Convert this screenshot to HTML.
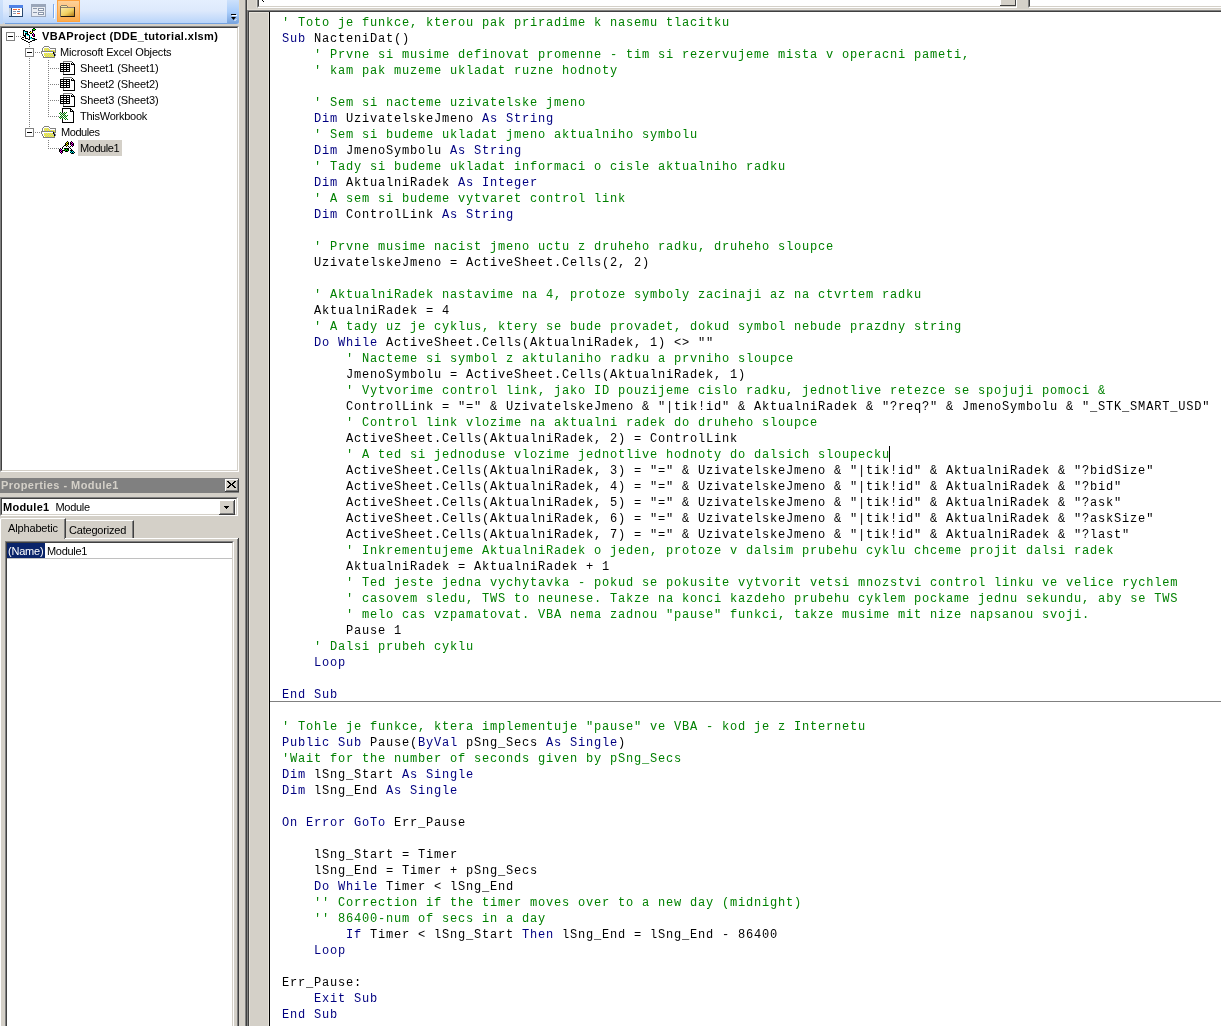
<!DOCTYPE html>
<html><head><meta charset="utf-8">
<style>
*{margin:0;padding:0;box-sizing:border-box}
html,body{will-change:transform;width:1221px;height:1026px;overflow:hidden;background:#d4d0c8;position:relative;font-family:"Liberation Sans",sans-serif}
.a{position:absolute}
.tr{font-size:11px;line-height:14px;white-space:nowrap;color:#000}
/* code */
#code{position:absolute;left:270px;top:12px;width:951px;height:1014px;background:#fff;overflow:hidden}
#code pre{position:absolute;left:12px;top:3px;font-family:"Liberation Mono",monospace;font-size:12px;letter-spacing:0.8px;line-height:16px;color:#000;white-space:pre}
.c{color:#008000}
.k{color:#000080}
</style></head><body>

<!-- left toolbar -->
<div class="a" style="left:0;top:0;width:3px;height:24px;background:linear-gradient(#cfe2fb,#b9d4f8)"></div>
<div class="a" style="left:3px;top:0;width:236px;height:24px;background:linear-gradient(#e4effe 0%,#dde9fc 45%,#b6d3fa 100%);border-bottom-left-radius:3px"></div>
<div class="a" style="left:5px;top:23px;width:222px;height:1px;background:#73a1e0"></div>
<div class="a" style="left:227px;top:0;width:12px;height:24px;background:linear-gradient(#cde1fb 0%,#a9cdfb 50%,#76a2dd 100%);border-bottom-right-radius:3px"></div>
<div class="a" style="left:231px;top:14px;width:5px;height:1px;background:#000"></div>
<div class="a" style="left:232px;top:15px;width:5px;height:1px;background:#fff"></div>
<svg class="a" style="left:230px;top:16px" width="8" height="6"><path d="M1 1h5l-2.5 3z" fill="#000"/><path d="M4.5 5l2-2" stroke="#fff" stroke-width="1"/></svg>
<!-- icon view code -->
<svg class="a" style="left:9px;top:5px" width="14" height="12">
<rect x="0" y="0" width="14" height="12" fill="#2b4a70"/>
<rect x="0" y="0" width="14" height="3" fill="#4f82e6"/>
<rect x="0" y="3" width="2" height="8" fill="#c8d4e0"/>
<rect x="3" y="3" width="10" height="8" fill="#fff"/>
<rect x="4" y="4" width="4" height="1" fill="#f36b3d"/><rect x="9" y="4" width="2" height="1" fill="#f36b3d"/>
<rect x="4" y="6" width="3" height="1" fill="#8a98b0"/><rect x="8" y="6" width="3" height="1" fill="#6080a8"/>
<rect x="4" y="8" width="3" height="1" fill="#8a98b0"/><rect x="8" y="8" width="3" height="1" fill="#f36b3d"/>
</svg>
<!-- icon view object -->
<svg class="a" style="left:31px;top:4px" width="15" height="13">
<rect x="0" y="0" width="15" height="13" fill="#9aa6ba"/>
<rect x="1" y="3" width="13" height="9" fill="#e8ecf2"/>
<rect x="2" y="4" width="4" height="1" fill="#8a96aa"/><rect x="2" y="8" width="4" height="1" fill="#8a96aa"/>
<rect x="7" y="4" width="6" height="3" fill="#8a96aa"/><rect x="8" y="5" width="4" height="1" fill="#fff"/>
<rect x="7" y="8" width="6" height="3" fill="#8a96aa"/><rect x="8" y="9" width="4" height="1" fill="#fff"/>
</svg>
<div class="a" style="left:53px;top:4px;width:1px;height:14px;background:#7ba9ee"></div>
<div class="a" style="left:54px;top:5px;width:1px;height:14px;background:#fff"></div>
<!-- toggle folders -->
<div class="a" style="left:57px;top:0;width:23px;height:22px;background:linear-gradient(#fdd19a,#fdac4c);border:1px solid #fea23f"></div>
<svg class="a" style="left:60px;top:5px" width="15" height="13" shape-rendering="crispEdges">
<defs><linearGradient id="fg" x1="0" y1="0" x2="1" y2="1"><stop offset="0" stop-color="#fbeaa6"/><stop offset="0.55" stop-color="#f2d060"/><stop offset="1" stop-color="#b07818"/></linearGradient></defs>
<rect x="1" y="0" width="6" height="1" fill="#8a8070"/>
<rect x="0" y="1" width="1" height="11" fill="#7a7060"/>
<rect x="1" y="1" width="6" height="1" fill="#f8e8a0"/>
<rect x="7" y="1" width="1" height="1" fill="#8a8070"/>
<rect x="1" y="2" width="13" height="1" fill="#8a8070"/>
<rect x="1" y="3" width="13" height="8" fill="url(#fg)"/>
<rect x="1" y="11" width="14" height="1" fill="#201810"/>
<rect x="14" y="2" width="1" height="10" fill="#302418"/>
</svg>

<!-- project explorer box -->
<div class="a" style="left:0;top:26px;width:239px;height:446px;border-top:1px solid #808080;border-left:1px solid #808080;border-right:1px solid #fff;border-bottom:1px solid #fff"></div>
<div class="a" style="left:1px;top:27px;width:237px;height:444px;border-top:1px solid #404040;border-left:1px solid #404040;border-right:1px solid #d4d0c8;border-bottom:1px solid #d4d0c8;background:#fff"></div>
<svg class="a" style="left:0;top:0" width="239" height="470">
<g fill="#808080"><rect x="16" y="36" width="1" height="1"/><rect x="18" y="36" width="1" height="1"/><rect x="20" y="36" width="1" height="1"/><rect x="29" y="42" width="1" height="1"/><rect x="29" y="44" width="1" height="1"/><rect x="29" y="46" width="1" height="1"/><rect x="29" y="58" width="1" height="1"/><rect x="29" y="60" width="1" height="1"/><rect x="29" y="62" width="1" height="1"/><rect x="29" y="64" width="1" height="1"/><rect x="29" y="66" width="1" height="1"/><rect x="29" y="68" width="1" height="1"/><rect x="29" y="70" width="1" height="1"/><rect x="29" y="72" width="1" height="1"/><rect x="29" y="74" width="1" height="1"/><rect x="29" y="76" width="1" height="1"/><rect x="29" y="78" width="1" height="1"/><rect x="29" y="80" width="1" height="1"/><rect x="29" y="82" width="1" height="1"/><rect x="29" y="84" width="1" height="1"/><rect x="29" y="86" width="1" height="1"/><rect x="29" y="88" width="1" height="1"/><rect x="29" y="90" width="1" height="1"/><rect x="29" y="92" width="1" height="1"/><rect x="29" y="94" width="1" height="1"/><rect x="29" y="96" width="1" height="1"/><rect x="29" y="98" width="1" height="1"/><rect x="29" y="100" width="1" height="1"/><rect x="29" y="102" width="1" height="1"/><rect x="29" y="104" width="1" height="1"/><rect x="29" y="106" width="1" height="1"/><rect x="29" y="108" width="1" height="1"/><rect x="29" y="110" width="1" height="1"/><rect x="29" y="112" width="1" height="1"/><rect x="29" y="114" width="1" height="1"/><rect x="29" y="116" width="1" height="1"/><rect x="29" y="118" width="1" height="1"/><rect x="29" y="120" width="1" height="1"/><rect x="29" y="122" width="1" height="1"/><rect x="29" y="124" width="1" height="1"/><rect x="29" y="126" width="1" height="1"/><rect x="35" y="52" width="1" height="1"/><rect x="37" y="52" width="1" height="1"/><rect x="39" y="52" width="1" height="1"/><rect x="35" y="132" width="1" height="1"/><rect x="37" y="132" width="1" height="1"/><rect x="39" y="132" width="1" height="1"/><rect x="48" y="60" width="1" height="1"/><rect x="48" y="62" width="1" height="1"/><rect x="48" y="64" width="1" height="1"/><rect x="48" y="66" width="1" height="1"/><rect x="48" y="68" width="1" height="1"/><rect x="48" y="70" width="1" height="1"/><rect x="48" y="72" width="1" height="1"/><rect x="48" y="74" width="1" height="1"/><rect x="48" y="76" width="1" height="1"/><rect x="48" y="78" width="1" height="1"/><rect x="48" y="80" width="1" height="1"/><rect x="48" y="82" width="1" height="1"/><rect x="48" y="84" width="1" height="1"/><rect x="48" y="86" width="1" height="1"/><rect x="48" y="88" width="1" height="1"/><rect x="48" y="90" width="1" height="1"/><rect x="48" y="92" width="1" height="1"/><rect x="48" y="94" width="1" height="1"/><rect x="48" y="96" width="1" height="1"/><rect x="48" y="98" width="1" height="1"/><rect x="48" y="100" width="1" height="1"/><rect x="48" y="102" width="1" height="1"/><rect x="48" y="104" width="1" height="1"/><rect x="48" y="106" width="1" height="1"/><rect x="48" y="108" width="1" height="1"/><rect x="48" y="110" width="1" height="1"/><rect x="48" y="112" width="1" height="1"/><rect x="48" y="114" width="1" height="1"/><rect x="48" y="116" width="1" height="1"/><rect x="50" y="68" width="1" height="1"/><rect x="52" y="68" width="1" height="1"/><rect x="54" y="68" width="1" height="1"/><rect x="56" y="68" width="1" height="1"/><rect x="58" y="68" width="1" height="1"/><rect x="50" y="84" width="1" height="1"/><rect x="52" y="84" width="1" height="1"/><rect x="54" y="84" width="1" height="1"/><rect x="56" y="84" width="1" height="1"/><rect x="58" y="84" width="1" height="1"/><rect x="50" y="100" width="1" height="1"/><rect x="52" y="100" width="1" height="1"/><rect x="54" y="100" width="1" height="1"/><rect x="56" y="100" width="1" height="1"/><rect x="58" y="100" width="1" height="1"/><rect x="50" y="116" width="1" height="1"/><rect x="52" y="116" width="1" height="1"/><rect x="54" y="116" width="1" height="1"/><rect x="56" y="116" width="1" height="1"/><rect x="58" y="116" width="1" height="1"/><rect x="48" y="140" width="1" height="1"/><rect x="48" y="142" width="1" height="1"/><rect x="48" y="144" width="1" height="1"/><rect x="48" y="146" width="1" height="1"/><rect x="48" y="148" width="1" height="1"/><rect x="50" y="148" width="1" height="1"/><rect x="52" y="148" width="1" height="1"/><rect x="54" y="148" width="1" height="1"/><rect x="56" y="148" width="1" height="1"/><rect x="58" y="148" width="1" height="1"/></g>
<rect x="6.5" y="32.5" width="8" height="8" fill="#fff" stroke="#808080"/><rect x="8" y="36" width="5" height="1" fill="#000"/><rect x="25.5" y="48.5" width="8" height="8" fill="#fff" stroke="#808080"/><rect x="27" y="52" width="5" height="1" fill="#000"/><rect x="25.5" y="128.5" width="8" height="8" fill="#fff" stroke="#808080"/><rect x="27" y="132" width="5" height="1" fill="#000"/>
<!-- project icon --><rect x="33" y="28" width="2" height="1" fill="#000"/><rect x="32" y="29" width="1" height="1" fill="#000"/><rect x="33" y="29" width="2" height="1" fill="#00ff00"/><rect x="35" y="29" width="1" height="1" fill="#000"/><rect x="23" y="30" width="2" height="1" fill="#000"/><rect x="32" y="30" width="3" height="1" fill="#000"/><rect x="23" y="31" width="1" height="1" fill="#000"/><rect x="24" y="31" width="1" height="1" fill="#00ffff"/><rect x="25" y="31" width="3" height="1" fill="#000"/><rect x="30" y="31" width="1" height="1" fill="#000"/><rect x="32" y="31" width="1" height="1" fill="#000"/><rect x="23" y="32" width="1" height="1" fill="#000"/><rect x="24" y="32" width="1" height="1" fill="#fff"/><rect x="25" y="32" width="2" height="1" fill="#00ffff"/><rect x="27" y="32" width="1" height="1" fill="#000"/><rect x="29" y="32" width="1" height="1" fill="#000"/><rect x="30" y="32" width="2" height="1" fill="#ffff00"/><rect x="32" y="32" width="1" height="1" fill="#000"/><rect x="23" y="33" width="1" height="1" fill="#000"/><rect x="24" y="33" width="1" height="1" fill="#fff"/><rect x="25" y="33" width="3" height="1" fill="#000"/><rect x="30" y="33" width="2" height="1" fill="#000"/><rect x="32" y="33" width="1" height="1" fill="#fff"/><rect x="33" y="33" width="1" height="1" fill="#000"/><rect x="23" y="34" width="1" height="1" fill="#000"/><rect x="24" y="34" width="1" height="1" fill="#fff"/><rect x="25" y="34" width="1" height="1" fill="#000"/><rect x="26" y="34" width="1" height="1" fill="#00ffff"/><rect x="27" y="34" width="2" height="1" fill="#000"/><rect x="30" y="34" width="1" height="1" fill="#fff"/><rect x="32" y="34" width="1" height="1" fill="#000"/><rect x="33" y="34" width="1" height="1" fill="#ff00ff"/><rect x="34" y="34" width="1" height="1" fill="#000"/><rect x="23" y="35" width="3" height="1" fill="#000"/><rect x="26" y="35" width="1" height="1" fill="#fff"/><rect x="27" y="35" width="2" height="1" fill="#00ffff"/><rect x="29" y="35" width="1" height="1" fill="#000"/><rect x="32" y="35" width="1" height="1" fill="#000"/><rect x="33" y="35" width="1" height="1" fill="#ff00ff"/><rect x="34" y="35" width="1" height="1" fill="#000"/><rect x="24" y="36" width="2" height="1" fill="#000"/><rect x="26" y="36" width="3" height="1" fill="#fff"/><rect x="29" y="36" width="1" height="1" fill="#000"/><rect x="33" y="36" width="2" height="1" fill="#000"/><rect x="22" y="37" width="2" height="1" fill="#000"/><rect x="25" y="37" width="1" height="1" fill="#000"/><rect x="26" y="37" width="3" height="1" fill="#fff"/><rect x="29" y="37" width="1" height="1" fill="#000"/><rect x="30" y="37" width="1" height="1" fill="#00ffff"/><rect x="31" y="37" width="1" height="1" fill="#000"/><rect x="21" y="38" width="1" height="1" fill="#000"/><rect x="22" y="38" width="1" height="1" fill="#fff"/><rect x="25" y="38" width="3" height="1" fill="#000"/><rect x="28" y="38" width="1" height="1" fill="#fff"/><rect x="29" y="38" width="1" height="1" fill="#000"/><rect x="30" y="38" width="2" height="1" fill="#00ffff"/><rect x="32" y="38" width="3" height="1" fill="#000"/><rect x="22" y="39" width="2" height="1" fill="#000"/><rect x="28" y="39" width="2" height="1" fill="#000"/><rect x="30" y="39" width="3" height="1" fill="#fff"/><rect x="33" y="39" width="1" height="1" fill="#00ffff"/><rect x="34" y="39" width="3" height="1" fill="#000"/><rect x="24" y="40" width="2" height="1" fill="#000"/><rect x="32" y="40" width="3" height="1" fill="#000"/><rect x="26" y="41" width="2" height="1" fill="#000"/><rect x="30" y="41" width="2" height="1" fill="#000"/><rect x="28" y="42" width="2" height="1" fill="#000"/>
<rect x="44" y="46" width="5" height="1" fill="#808080"/><rect x="43" y="47" width="1" height="1" fill="#808080"/><rect x="44" y="47" width="5" height="1" fill="#fff"/><rect x="49" y="47" width="1" height="1" fill="#808080"/><rect x="42" y="48" width="1" height="1" fill="#808080"/><rect x="43" y="48" width="1" height="1" fill="#fff"/><rect x="44" y="48" width="1" height="1" fill="#c0c0c0"/><rect x="45" y="48" width="1" height="1" fill="#ffff00"/><rect x="46" y="48" width="1" height="1" fill="#c0c0c0"/><rect x="47" y="48" width="1" height="1" fill="#ffff00"/><rect x="48" y="48" width="1" height="1" fill="#c0c0c0"/><rect x="49" y="48" width="1" height="1" fill="#fff"/><rect x="50" y="48" width="6" height="1" fill="#808080"/><rect x="42" y="49" width="1" height="1" fill="#808080"/><rect x="43" y="49" width="1" height="1" fill="#fff"/><rect x="44" y="49" width="1" height="1" fill="#ffff00"/><rect x="45" y="49" width="1" height="1" fill="#c0c0c0"/><rect x="46" y="49" width="1" height="1" fill="#ffff00"/><rect x="47" y="49" width="1" height="1" fill="#c0c0c0"/><rect x="48" y="49" width="1" height="1" fill="#ffff00"/><rect x="49" y="49" width="1" height="1" fill="#c0c0c0"/><rect x="50" y="49" width="5" height="1" fill="#fff"/><rect x="55" y="49" width="1" height="1" fill="#808080"/><rect x="42" y="50" width="1" height="1" fill="#808080"/><rect x="43" y="50" width="1" height="1" fill="#fff"/><rect x="44" y="50" width="1" height="1" fill="#c0c0c0"/><rect x="45" y="50" width="1" height="1" fill="#ffff00"/><rect x="46" y="50" width="1" height="1" fill="#c0c0c0"/><rect x="47" y="50" width="1" height="1" fill="#ffff00"/><rect x="48" y="50" width="1" height="1" fill="#c0c0c0"/><rect x="49" y="50" width="1" height="1" fill="#ffff00"/><rect x="50" y="50" width="1" height="1" fill="#c0c0c0"/><rect x="51" y="50" width="1" height="1" fill="#ffff00"/><rect x="52" y="50" width="1" height="1" fill="#c0c0c0"/><rect x="53" y="50" width="1" height="1" fill="#ffff00"/><rect x="54" y="50" width="1" height="1" fill="#c0c0c0"/><rect x="55" y="50" width="1" height="1" fill="#808080"/><rect x="41" y="51" width="13" height="1" fill="#808080"/><rect x="54" y="51" width="1" height="1" fill="#ffff00"/><rect x="55" y="51" width="1" height="1" fill="#808080"/><rect x="41" y="52" width="1" height="1" fill="#808080"/><rect x="42" y="52" width="11" height="1" fill="#fff"/><rect x="53" y="52" width="1" height="1" fill="#000"/><rect x="54" y="52" width="2" height="1" fill="#808080"/><rect x="41" y="53" width="1" height="1" fill="#808080"/><rect x="42" y="53" width="2" height="1" fill="#fff"/><rect x="44" y="53" width="1" height="1" fill="#ffff00"/><rect x="45" y="53" width="1" height="1" fill="#c0c0c0"/><rect x="46" y="53" width="1" height="1" fill="#ffff00"/><rect x="47" y="53" width="1" height="1" fill="#c0c0c0"/><rect x="48" y="53" width="1" height="1" fill="#ffff00"/><rect x="49" y="53" width="1" height="1" fill="#c0c0c0"/><rect x="50" y="53" width="1" height="1" fill="#ffff00"/><rect x="51" y="53" width="1" height="1" fill="#c0c0c0"/><rect x="52" y="53" width="1" height="1" fill="#ffff00"/><rect x="53" y="53" width="1" height="1" fill="#000"/><rect x="54" y="53" width="1" height="1" fill="#808080"/><rect x="42" y="54" width="1" height="1" fill="#808080"/><rect x="43" y="54" width="1" height="1" fill="#fff"/><rect x="44" y="54" width="1" height="1" fill="#c0c0c0"/><rect x="45" y="54" width="1" height="1" fill="#ffff00"/><rect x="46" y="54" width="1" height="1" fill="#c0c0c0"/><rect x="47" y="54" width="1" height="1" fill="#ffff00"/><rect x="48" y="54" width="1" height="1" fill="#c0c0c0"/><rect x="49" y="54" width="1" height="1" fill="#ffff00"/><rect x="50" y="54" width="1" height="1" fill="#c0c0c0"/><rect x="51" y="54" width="1" height="1" fill="#ffff00"/><rect x="52" y="54" width="2" height="1" fill="#c0c0c0"/><rect x="54" y="54" width="1" height="1" fill="#000"/><rect x="55" y="54" width="1" height="1" fill="#808080"/><rect x="42" y="55" width="1" height="1" fill="#808080"/><rect x="43" y="55" width="1" height="1" fill="#fff"/><rect x="44" y="55" width="1" height="1" fill="#ffff00"/><rect x="45" y="55" width="1" height="1" fill="#c0c0c0"/><rect x="46" y="55" width="1" height="1" fill="#ffff00"/><rect x="47" y="55" width="1" height="1" fill="#c0c0c0"/><rect x="48" y="55" width="1" height="1" fill="#ffff00"/><rect x="49" y="55" width="1" height="1" fill="#c0c0c0"/><rect x="50" y="55" width="1" height="1" fill="#ffff00"/><rect x="51" y="55" width="1" height="1" fill="#c0c0c0"/><rect x="52" y="55" width="1" height="1" fill="#ffff00"/><rect x="53" y="55" width="1" height="1" fill="#c0c0c0"/><rect x="54" y="55" width="1" height="1" fill="#000"/><rect x="55" y="55" width="1" height="1" fill="#808080"/><rect x="43" y="56" width="1" height="1" fill="#808080"/><rect x="44" y="56" width="1" height="1" fill="#fff"/><rect x="45" y="56" width="1" height="1" fill="#ffff00"/><rect x="46" y="56" width="1" height="1" fill="#c0c0c0"/><rect x="47" y="56" width="1" height="1" fill="#ffff00"/><rect x="48" y="56" width="1" height="1" fill="#c0c0c0"/><rect x="49" y="56" width="1" height="1" fill="#ffff00"/><rect x="50" y="56" width="1" height="1" fill="#c0c0c0"/><rect x="51" y="56" width="1" height="1" fill="#ffff00"/><rect x="52" y="56" width="1" height="1" fill="#c0c0c0"/><rect x="53" y="56" width="1" height="1" fill="#ffff00"/><rect x="54" y="56" width="1" height="1" fill="#808080"/><rect x="43" y="57" width="12" height="1" fill="#808080"/><rect x="44" y="126" width="5" height="1" fill="#808080"/><rect x="43" y="127" width="1" height="1" fill="#808080"/><rect x="44" y="127" width="5" height="1" fill="#fff"/><rect x="49" y="127" width="1" height="1" fill="#808080"/><rect x="42" y="128" width="1" height="1" fill="#808080"/><rect x="43" y="128" width="1" height="1" fill="#fff"/><rect x="44" y="128" width="1" height="1" fill="#c0c0c0"/><rect x="45" y="128" width="1" height="1" fill="#ffff00"/><rect x="46" y="128" width="1" height="1" fill="#c0c0c0"/><rect x="47" y="128" width="1" height="1" fill="#ffff00"/><rect x="48" y="128" width="1" height="1" fill="#c0c0c0"/><rect x="49" y="128" width="1" height="1" fill="#fff"/><rect x="50" y="128" width="6" height="1" fill="#808080"/><rect x="42" y="129" width="1" height="1" fill="#808080"/><rect x="43" y="129" width="1" height="1" fill="#fff"/><rect x="44" y="129" width="1" height="1" fill="#ffff00"/><rect x="45" y="129" width="1" height="1" fill="#c0c0c0"/><rect x="46" y="129" width="1" height="1" fill="#ffff00"/><rect x="47" y="129" width="1" height="1" fill="#c0c0c0"/><rect x="48" y="129" width="1" height="1" fill="#ffff00"/><rect x="49" y="129" width="1" height="1" fill="#c0c0c0"/><rect x="50" y="129" width="5" height="1" fill="#fff"/><rect x="55" y="129" width="1" height="1" fill="#808080"/><rect x="42" y="130" width="1" height="1" fill="#808080"/><rect x="43" y="130" width="1" height="1" fill="#fff"/><rect x="44" y="130" width="1" height="1" fill="#c0c0c0"/><rect x="45" y="130" width="1" height="1" fill="#ffff00"/><rect x="46" y="130" width="1" height="1" fill="#c0c0c0"/><rect x="47" y="130" width="1" height="1" fill="#ffff00"/><rect x="48" y="130" width="1" height="1" fill="#c0c0c0"/><rect x="49" y="130" width="1" height="1" fill="#ffff00"/><rect x="50" y="130" width="1" height="1" fill="#c0c0c0"/><rect x="51" y="130" width="1" height="1" fill="#ffff00"/><rect x="52" y="130" width="1" height="1" fill="#c0c0c0"/><rect x="53" y="130" width="1" height="1" fill="#ffff00"/><rect x="54" y="130" width="1" height="1" fill="#c0c0c0"/><rect x="55" y="130" width="1" height="1" fill="#808080"/><rect x="41" y="131" width="13" height="1" fill="#808080"/><rect x="54" y="131" width="1" height="1" fill="#ffff00"/><rect x="55" y="131" width="1" height="1" fill="#808080"/><rect x="41" y="132" width="1" height="1" fill="#808080"/><rect x="42" y="132" width="11" height="1" fill="#fff"/><rect x="53" y="132" width="1" height="1" fill="#000"/><rect x="54" y="132" width="2" height="1" fill="#808080"/><rect x="41" y="133" width="1" height="1" fill="#808080"/><rect x="42" y="133" width="2" height="1" fill="#fff"/><rect x="44" y="133" width="1" height="1" fill="#ffff00"/><rect x="45" y="133" width="1" height="1" fill="#c0c0c0"/><rect x="46" y="133" width="1" height="1" fill="#ffff00"/><rect x="47" y="133" width="1" height="1" fill="#c0c0c0"/><rect x="48" y="133" width="1" height="1" fill="#ffff00"/><rect x="49" y="133" width="1" height="1" fill="#c0c0c0"/><rect x="50" y="133" width="1" height="1" fill="#ffff00"/><rect x="51" y="133" width="1" height="1" fill="#c0c0c0"/><rect x="52" y="133" width="1" height="1" fill="#ffff00"/><rect x="53" y="133" width="1" height="1" fill="#000"/><rect x="54" y="133" width="1" height="1" fill="#808080"/><rect x="42" y="134" width="1" height="1" fill="#808080"/><rect x="43" y="134" width="1" height="1" fill="#fff"/><rect x="44" y="134" width="1" height="1" fill="#c0c0c0"/><rect x="45" y="134" width="1" height="1" fill="#ffff00"/><rect x="46" y="134" width="1" height="1" fill="#c0c0c0"/><rect x="47" y="134" width="1" height="1" fill="#ffff00"/><rect x="48" y="134" width="1" height="1" fill="#c0c0c0"/><rect x="49" y="134" width="1" height="1" fill="#ffff00"/><rect x="50" y="134" width="1" height="1" fill="#c0c0c0"/><rect x="51" y="134" width="1" height="1" fill="#ffff00"/><rect x="52" y="134" width="2" height="1" fill="#c0c0c0"/><rect x="54" y="134" width="1" height="1" fill="#000"/><rect x="55" y="134" width="1" height="1" fill="#808080"/><rect x="42" y="135" width="1" height="1" fill="#808080"/><rect x="43" y="135" width="1" height="1" fill="#fff"/><rect x="44" y="135" width="1" height="1" fill="#ffff00"/><rect x="45" y="135" width="1" height="1" fill="#c0c0c0"/><rect x="46" y="135" width="1" height="1" fill="#ffff00"/><rect x="47" y="135" width="1" height="1" fill="#c0c0c0"/><rect x="48" y="135" width="1" height="1" fill="#ffff00"/><rect x="49" y="135" width="1" height="1" fill="#c0c0c0"/><rect x="50" y="135" width="1" height="1" fill="#ffff00"/><rect x="51" y="135" width="1" height="1" fill="#c0c0c0"/><rect x="52" y="135" width="1" height="1" fill="#ffff00"/><rect x="53" y="135" width="1" height="1" fill="#c0c0c0"/><rect x="54" y="135" width="1" height="1" fill="#000"/><rect x="55" y="135" width="1" height="1" fill="#808080"/><rect x="43" y="136" width="1" height="1" fill="#808080"/><rect x="44" y="136" width="1" height="1" fill="#fff"/><rect x="45" y="136" width="1" height="1" fill="#ffff00"/><rect x="46" y="136" width="1" height="1" fill="#c0c0c0"/><rect x="47" y="136" width="1" height="1" fill="#ffff00"/><rect x="48" y="136" width="1" height="1" fill="#c0c0c0"/><rect x="49" y="136" width="1" height="1" fill="#ffff00"/><rect x="50" y="136" width="1" height="1" fill="#c0c0c0"/><rect x="51" y="136" width="1" height="1" fill="#ffff00"/><rect x="52" y="136" width="1" height="1" fill="#c0c0c0"/><rect x="53" y="136" width="1" height="1" fill="#ffff00"/><rect x="54" y="136" width="1" height="1" fill="#808080"/><rect x="43" y="137" width="12" height="1" fill="#808080"/>
<rect x="63" y="61" width="9" height="1" fill="#808080"/><rect x="63" y="62" width="1" height="1" fill="#808080"/><rect x="64" y="62" width="8" height="1" fill="#fff"/><rect x="72" y="62" width="1" height="1" fill="#000"/><rect x="60" y="63" width="10" height="1" fill="#000"/><rect x="70" y="63" width="1" height="1" fill="#fff"/><rect x="71" y="63" width="1" height="1" fill="#000"/><rect x="72" y="63" width="1" height="1" fill="#fff"/><rect x="73" y="63" width="1" height="1" fill="#000"/><rect x="60" y="64" width="1" height="1" fill="#000"/><rect x="61" y="64" width="2" height="1" fill="#fff"/><rect x="63" y="64" width="1" height="1" fill="#000"/><rect x="64" y="64" width="2" height="1" fill="#fff"/><rect x="66" y="64" width="1" height="1" fill="#000"/><rect x="67" y="64" width="2" height="1" fill="#fff"/><rect x="69" y="64" width="1" height="1" fill="#000"/><rect x="70" y="64" width="1" height="1" fill="#fff"/><rect x="71" y="64" width="4" height="1" fill="#000"/><rect x="60" y="65" width="10" height="1" fill="#000"/><rect x="70" y="65" width="4" height="1" fill="#fff"/><rect x="74" y="65" width="1" height="1" fill="#000"/><rect x="60" y="66" width="1" height="1" fill="#000"/><rect x="61" y="66" width="2" height="1" fill="#fff"/><rect x="63" y="66" width="1" height="1" fill="#000"/><rect x="64" y="66" width="2" height="1" fill="#fff"/><rect x="66" y="66" width="1" height="1" fill="#000"/><rect x="67" y="66" width="2" height="1" fill="#fff"/><rect x="69" y="66" width="1" height="1" fill="#000"/><rect x="70" y="66" width="4" height="1" fill="#fff"/><rect x="74" y="66" width="1" height="1" fill="#000"/><rect x="60" y="67" width="10" height="1" fill="#000"/><rect x="70" y="67" width="4" height="1" fill="#fff"/><rect x="74" y="67" width="1" height="1" fill="#000"/><rect x="60" y="68" width="1" height="1" fill="#000"/><rect x="61" y="68" width="2" height="1" fill="#fff"/><rect x="63" y="68" width="1" height="1" fill="#000"/><rect x="64" y="68" width="2" height="1" fill="#fff"/><rect x="66" y="68" width="1" height="1" fill="#000"/><rect x="67" y="68" width="2" height="1" fill="#fff"/><rect x="69" y="68" width="1" height="1" fill="#000"/><rect x="70" y="68" width="4" height="1" fill="#fff"/><rect x="74" y="68" width="1" height="1" fill="#000"/><rect x="60" y="69" width="10" height="1" fill="#000"/><rect x="70" y="69" width="4" height="1" fill="#fff"/><rect x="74" y="69" width="1" height="1" fill="#000"/><rect x="60" y="70" width="1" height="1" fill="#000"/><rect x="61" y="70" width="2" height="1" fill="#fff"/><rect x="63" y="70" width="1" height="1" fill="#000"/><rect x="64" y="70" width="2" height="1" fill="#fff"/><rect x="66" y="70" width="1" height="1" fill="#000"/><rect x="67" y="70" width="2" height="1" fill="#fff"/><rect x="69" y="70" width="1" height="1" fill="#000"/><rect x="70" y="70" width="4" height="1" fill="#fff"/><rect x="74" y="70" width="1" height="1" fill="#000"/><rect x="60" y="71" width="10" height="1" fill="#000"/><rect x="70" y="71" width="4" height="1" fill="#fff"/><rect x="74" y="71" width="1" height="1" fill="#000"/><rect x="63" y="72" width="1" height="1" fill="#808080"/><rect x="64" y="72" width="10" height="1" fill="#fff"/><rect x="74" y="72" width="1" height="1" fill="#000"/><rect x="63" y="73" width="1" height="1" fill="#808080"/><rect x="64" y="73" width="10" height="1" fill="#fff"/><rect x="74" y="73" width="1" height="1" fill="#000"/><rect x="63" y="74" width="12" height="1" fill="#000"/><rect x="63" y="77" width="9" height="1" fill="#808080"/><rect x="63" y="78" width="1" height="1" fill="#808080"/><rect x="64" y="78" width="8" height="1" fill="#fff"/><rect x="72" y="78" width="1" height="1" fill="#000"/><rect x="60" y="79" width="10" height="1" fill="#000"/><rect x="70" y="79" width="1" height="1" fill="#fff"/><rect x="71" y="79" width="1" height="1" fill="#000"/><rect x="72" y="79" width="1" height="1" fill="#fff"/><rect x="73" y="79" width="1" height="1" fill="#000"/><rect x="60" y="80" width="1" height="1" fill="#000"/><rect x="61" y="80" width="2" height="1" fill="#fff"/><rect x="63" y="80" width="1" height="1" fill="#000"/><rect x="64" y="80" width="2" height="1" fill="#fff"/><rect x="66" y="80" width="1" height="1" fill="#000"/><rect x="67" y="80" width="2" height="1" fill="#fff"/><rect x="69" y="80" width="1" height="1" fill="#000"/><rect x="70" y="80" width="1" height="1" fill="#fff"/><rect x="71" y="80" width="4" height="1" fill="#000"/><rect x="60" y="81" width="10" height="1" fill="#000"/><rect x="70" y="81" width="4" height="1" fill="#fff"/><rect x="74" y="81" width="1" height="1" fill="#000"/><rect x="60" y="82" width="1" height="1" fill="#000"/><rect x="61" y="82" width="2" height="1" fill="#fff"/><rect x="63" y="82" width="1" height="1" fill="#000"/><rect x="64" y="82" width="2" height="1" fill="#fff"/><rect x="66" y="82" width="1" height="1" fill="#000"/><rect x="67" y="82" width="2" height="1" fill="#fff"/><rect x="69" y="82" width="1" height="1" fill="#000"/><rect x="70" y="82" width="4" height="1" fill="#fff"/><rect x="74" y="82" width="1" height="1" fill="#000"/><rect x="60" y="83" width="10" height="1" fill="#000"/><rect x="70" y="83" width="4" height="1" fill="#fff"/><rect x="74" y="83" width="1" height="1" fill="#000"/><rect x="60" y="84" width="1" height="1" fill="#000"/><rect x="61" y="84" width="2" height="1" fill="#fff"/><rect x="63" y="84" width="1" height="1" fill="#000"/><rect x="64" y="84" width="2" height="1" fill="#fff"/><rect x="66" y="84" width="1" height="1" fill="#000"/><rect x="67" y="84" width="2" height="1" fill="#fff"/><rect x="69" y="84" width="1" height="1" fill="#000"/><rect x="70" y="84" width="4" height="1" fill="#fff"/><rect x="74" y="84" width="1" height="1" fill="#000"/><rect x="60" y="85" width="10" height="1" fill="#000"/><rect x="70" y="85" width="4" height="1" fill="#fff"/><rect x="74" y="85" width="1" height="1" fill="#000"/><rect x="60" y="86" width="1" height="1" fill="#000"/><rect x="61" y="86" width="2" height="1" fill="#fff"/><rect x="63" y="86" width="1" height="1" fill="#000"/><rect x="64" y="86" width="2" height="1" fill="#fff"/><rect x="66" y="86" width="1" height="1" fill="#000"/><rect x="67" y="86" width="2" height="1" fill="#fff"/><rect x="69" y="86" width="1" height="1" fill="#000"/><rect x="70" y="86" width="4" height="1" fill="#fff"/><rect x="74" y="86" width="1" height="1" fill="#000"/><rect x="60" y="87" width="10" height="1" fill="#000"/><rect x="70" y="87" width="4" height="1" fill="#fff"/><rect x="74" y="87" width="1" height="1" fill="#000"/><rect x="63" y="88" width="1" height="1" fill="#808080"/><rect x="64" y="88" width="10" height="1" fill="#fff"/><rect x="74" y="88" width="1" height="1" fill="#000"/><rect x="63" y="89" width="1" height="1" fill="#808080"/><rect x="64" y="89" width="10" height="1" fill="#fff"/><rect x="74" y="89" width="1" height="1" fill="#000"/><rect x="63" y="90" width="12" height="1" fill="#000"/><rect x="63" y="93" width="9" height="1" fill="#808080"/><rect x="63" y="94" width="1" height="1" fill="#808080"/><rect x="64" y="94" width="8" height="1" fill="#fff"/><rect x="72" y="94" width="1" height="1" fill="#000"/><rect x="60" y="95" width="10" height="1" fill="#000"/><rect x="70" y="95" width="1" height="1" fill="#fff"/><rect x="71" y="95" width="1" height="1" fill="#000"/><rect x="72" y="95" width="1" height="1" fill="#fff"/><rect x="73" y="95" width="1" height="1" fill="#000"/><rect x="60" y="96" width="1" height="1" fill="#000"/><rect x="61" y="96" width="2" height="1" fill="#fff"/><rect x="63" y="96" width="1" height="1" fill="#000"/><rect x="64" y="96" width="2" height="1" fill="#fff"/><rect x="66" y="96" width="1" height="1" fill="#000"/><rect x="67" y="96" width="2" height="1" fill="#fff"/><rect x="69" y="96" width="1" height="1" fill="#000"/><rect x="70" y="96" width="1" height="1" fill="#fff"/><rect x="71" y="96" width="4" height="1" fill="#000"/><rect x="60" y="97" width="10" height="1" fill="#000"/><rect x="70" y="97" width="4" height="1" fill="#fff"/><rect x="74" y="97" width="1" height="1" fill="#000"/><rect x="60" y="98" width="1" height="1" fill="#000"/><rect x="61" y="98" width="2" height="1" fill="#fff"/><rect x="63" y="98" width="1" height="1" fill="#000"/><rect x="64" y="98" width="2" height="1" fill="#fff"/><rect x="66" y="98" width="1" height="1" fill="#000"/><rect x="67" y="98" width="2" height="1" fill="#fff"/><rect x="69" y="98" width="1" height="1" fill="#000"/><rect x="70" y="98" width="4" height="1" fill="#fff"/><rect x="74" y="98" width="1" height="1" fill="#000"/><rect x="60" y="99" width="10" height="1" fill="#000"/><rect x="70" y="99" width="4" height="1" fill="#fff"/><rect x="74" y="99" width="1" height="1" fill="#000"/><rect x="60" y="100" width="1" height="1" fill="#000"/><rect x="61" y="100" width="2" height="1" fill="#fff"/><rect x="63" y="100" width="1" height="1" fill="#000"/><rect x="64" y="100" width="2" height="1" fill="#fff"/><rect x="66" y="100" width="1" height="1" fill="#000"/><rect x="67" y="100" width="2" height="1" fill="#fff"/><rect x="69" y="100" width="1" height="1" fill="#000"/><rect x="70" y="100" width="4" height="1" fill="#fff"/><rect x="74" y="100" width="1" height="1" fill="#000"/><rect x="60" y="101" width="10" height="1" fill="#000"/><rect x="70" y="101" width="4" height="1" fill="#fff"/><rect x="74" y="101" width="1" height="1" fill="#000"/><rect x="60" y="102" width="1" height="1" fill="#000"/><rect x="61" y="102" width="2" height="1" fill="#fff"/><rect x="63" y="102" width="1" height="1" fill="#000"/><rect x="64" y="102" width="2" height="1" fill="#fff"/><rect x="66" y="102" width="1" height="1" fill="#000"/><rect x="67" y="102" width="2" height="1" fill="#fff"/><rect x="69" y="102" width="1" height="1" fill="#000"/><rect x="70" y="102" width="4" height="1" fill="#fff"/><rect x="74" y="102" width="1" height="1" fill="#000"/><rect x="60" y="103" width="10" height="1" fill="#000"/><rect x="70" y="103" width="4" height="1" fill="#fff"/><rect x="74" y="103" width="1" height="1" fill="#000"/><rect x="63" y="104" width="1" height="1" fill="#808080"/><rect x="64" y="104" width="10" height="1" fill="#fff"/><rect x="74" y="104" width="1" height="1" fill="#000"/><rect x="63" y="105" width="1" height="1" fill="#808080"/><rect x="64" y="105" width="10" height="1" fill="#fff"/><rect x="74" y="105" width="1" height="1" fill="#000"/><rect x="63" y="106" width="12" height="1" fill="#000"/>
<!-- workbook --><rect x="62" y="108" width="9" height="1" fill="#000"/><rect x="62" y="109" width="1" height="1" fill="#000"/><rect x="63" y="109" width="7" height="1" fill="#fff"/><rect x="70" y="109" width="2" height="1" fill="#000"/><rect x="62" y="110" width="1" height="1" fill="#000"/><rect x="63" y="110" width="7" height="1" fill="#fff"/><rect x="70" y="110" width="1" height="1" fill="#000"/><rect x="71" y="110" width="1" height="1" fill="#fff"/><rect x="72" y="110" width="1" height="1" fill="#000"/><rect x="62" y="111" width="1" height="1" fill="#000"/><rect x="63" y="111" width="7" height="1" fill="#fff"/><rect x="70" y="111" width="4" height="1" fill="#000"/><rect x="60" y="112" width="1" height="1" fill="#008000"/><rect x="62" y="112" width="1" height="1" fill="#000"/><rect x="63" y="112" width="1" height="1" fill="#fff"/><rect x="64" y="112" width="1" height="1" fill="#008000"/><rect x="66" y="112" width="1" height="1" fill="#008000"/><rect x="69" y="112" width="4" height="1" fill="#fff"/><rect x="73" y="112" width="1" height="1" fill="#000"/><rect x="59" y="113" width="1" height="1" fill="#008000"/><rect x="60" y="113" width="1" height="1" fill="#fff"/><rect x="61" y="113" width="1" height="1" fill="#008000"/><rect x="62" y="113" width="1" height="1" fill="#c0c0c0"/><rect x="63" y="113" width="1" height="1" fill="#008000"/><rect x="64" y="113" width="1" height="1" fill="#c0c0c0"/><rect x="65" y="113" width="1" height="1" fill="#008000"/><rect x="66" y="113" width="7" height="1" fill="#fff"/><rect x="73" y="113" width="1" height="1" fill="#000"/><rect x="60" y="114" width="1" height="1" fill="#008000"/><rect x="61" y="114" width="1" height="1" fill="#fff"/><rect x="62" y="114" width="1" height="1" fill="#008000"/><rect x="63" y="114" width="1" height="1" fill="#c0c0c0"/><rect x="64" y="114" width="1" height="1" fill="#008000"/><rect x="65" y="114" width="8" height="1" fill="#fff"/><rect x="73" y="114" width="1" height="1" fill="#000"/><rect x="61" y="115" width="1" height="1" fill="#008000"/><rect x="62" y="115" width="1" height="1" fill="#fff"/><rect x="63" y="115" width="1" height="1" fill="#008000"/><rect x="64" y="115" width="1" height="1" fill="#c0c0c0"/><rect x="65" y="115" width="1" height="1" fill="#008000"/><rect x="66" y="115" width="1" height="1" fill="#fff"/><rect x="67" y="115" width="1" height="1" fill="#008000"/><rect x="68" y="115" width="5" height="1" fill="#fff"/><rect x="73" y="115" width="1" height="1" fill="#000"/><rect x="60" y="116" width="1" height="1" fill="#008000"/><rect x="61" y="116" width="1" height="1" fill="#c0c0c0"/><rect x="62" y="116" width="1" height="1" fill="#008000"/><rect x="63" y="116" width="1" height="1" fill="#fff"/><rect x="64" y="116" width="1" height="1" fill="#008000"/><rect x="65" y="116" width="1" height="1" fill="#c0c0c0"/><rect x="66" y="116" width="1" height="1" fill="#008000"/><rect x="67" y="116" width="6" height="1" fill="#fff"/><rect x="73" y="116" width="1" height="1" fill="#000"/><rect x="59" y="117" width="1" height="1" fill="#008000"/><rect x="60" y="117" width="1" height="1" fill="#c0c0c0"/><rect x="61" y="117" width="1" height="1" fill="#008000"/><rect x="62" y="117" width="1" height="1" fill="#c0c0c0"/><rect x="63" y="117" width="1" height="1" fill="#008000"/><rect x="64" y="117" width="1" height="1" fill="#fff"/><rect x="65" y="117" width="1" height="1" fill="#008000"/><rect x="66" y="117" width="7" height="1" fill="#fff"/><rect x="73" y="117" width="1" height="1" fill="#000"/><rect x="60" y="118" width="1" height="1" fill="#008000"/><rect x="62" y="118" width="1" height="1" fill="#008000"/><rect x="63" y="118" width="1" height="1" fill="#fff"/><rect x="64" y="118" width="1" height="1" fill="#008000"/><rect x="65" y="118" width="1" height="1" fill="#fff"/><rect x="66" y="118" width="1" height="1" fill="#008000"/><rect x="67" y="118" width="6" height="1" fill="#fff"/><rect x="73" y="118" width="1" height="1" fill="#000"/><rect x="62" y="119" width="1" height="1" fill="#000"/><rect x="63" y="119" width="2" height="1" fill="#fff"/><rect x="65" y="119" width="1" height="1" fill="#008000"/><rect x="66" y="119" width="1" height="1" fill="#fff"/><rect x="67" y="119" width="1" height="1" fill="#008000"/><rect x="68" y="119" width="5" height="1" fill="#fff"/><rect x="73" y="119" width="1" height="1" fill="#000"/><rect x="62" y="120" width="1" height="1" fill="#000"/><rect x="63" y="120" width="10" height="1" fill="#fff"/><rect x="73" y="120" width="1" height="1" fill="#000"/><rect x="62" y="121" width="1" height="1" fill="#000"/><rect x="63" y="121" width="10" height="1" fill="#fff"/><rect x="73" y="121" width="1" height="1" fill="#000"/><rect x="62" y="122" width="12" height="1" fill="#000"/>
<!-- module icon --><rect x="67" y="141" width="1" height="1" fill="#000"/><rect x="71" y="141" width="1" height="1" fill="#000"/><rect x="66" y="142" width="1" height="1" fill="#000"/><rect x="67" y="142" width="1" height="1" fill="#ffff00"/><rect x="68" y="142" width="1" height="1" fill="#000"/><rect x="70" y="142" width="1" height="1" fill="#000"/><rect x="71" y="142" width="1" height="1" fill="#ff00ff"/><rect x="72" y="142" width="1" height="1" fill="#000"/><rect x="65" y="143" width="1" height="1" fill="#000"/><rect x="66" y="143" width="1" height="1" fill="#ffff00"/><rect x="67" y="143" width="2" height="1" fill="#000"/><rect x="70" y="143" width="2" height="1" fill="#000"/><rect x="72" y="143" width="1" height="1" fill="#ff00ff"/><rect x="73" y="143" width="1" height="1" fill="#000"/><rect x="65" y="144" width="2" height="1" fill="#000"/><rect x="67" y="144" width="1" height="1" fill="#ffff00"/><rect x="68" y="144" width="1" height="1" fill="#000"/><rect x="70" y="144" width="1" height="1" fill="#000"/><rect x="71" y="144" width="1" height="1" fill="#ff00ff"/><rect x="72" y="144" width="2" height="1" fill="#000"/><rect x="64" y="145" width="2" height="1" fill="#000"/><rect x="66" y="145" width="1" height="1" fill="#ffff00"/><rect x="67" y="145" width="1" height="1" fill="#000"/><rect x="71" y="145" width="1" height="1" fill="#000"/><rect x="72" y="145" width="1" height="1" fill="#ff00ff"/><rect x="73" y="145" width="1" height="1" fill="#000"/><rect x="63" y="146" width="1" height="1" fill="#000"/><rect x="66" y="146" width="1" height="1" fill="#000"/><rect x="68" y="146" width="1" height="1" fill="#000"/><rect x="70" y="146" width="1" height="1" fill="#000"/><rect x="72" y="146" width="1" height="1" fill="#000"/><rect x="62" y="147" width="1" height="1" fill="#000"/><rect x="69" y="147" width="1" height="1" fill="#000"/><rect x="60" y="148" width="1" height="1" fill="#000"/><rect x="62" y="148" width="1" height="1" fill="#000"/><rect x="64" y="148" width="5" height="1" fill="#000"/><rect x="70" y="148" width="1" height="1" fill="#000"/><rect x="59" y="149" width="1" height="1" fill="#000"/><rect x="60" y="149" width="1" height="1" fill="#ff00ff"/><rect x="61" y="149" width="1" height="1" fill="#000"/><rect x="64" y="149" width="1" height="1" fill="#00ff00"/><rect x="65" y="149" width="1" height="1" fill="#000"/><rect x="66" y="149" width="1" height="1" fill="#00ff00"/><rect x="67" y="149" width="2" height="1" fill="#000"/><rect x="71" y="149" width="1" height="1" fill="#000"/><rect x="59" y="150" width="2" height="1" fill="#000"/><rect x="61" y="150" width="1" height="1" fill="#ff00ff"/><rect x="62" y="150" width="3" height="1" fill="#000"/><rect x="65" y="150" width="1" height="1" fill="#00ff00"/><rect x="66" y="150" width="1" height="1" fill="#000"/><rect x="67" y="150" width="1" height="1" fill="#00ff00"/><rect x="68" y="150" width="1" height="1" fill="#000"/><rect x="70" y="150" width="3" height="1" fill="#000"/><rect x="59" y="151" width="1" height="1" fill="#000"/><rect x="60" y="151" width="1" height="1" fill="#ff00ff"/><rect x="61" y="151" width="2" height="1" fill="#000"/><rect x="65" y="151" width="3" height="1" fill="#000"/><rect x="70" y="151" width="1" height="1" fill="#00ffff"/><rect x="71" y="151" width="1" height="1" fill="#000"/><rect x="72" y="151" width="1" height="1" fill="#00ffff"/><rect x="73" y="151" width="1" height="1" fill="#000"/><rect x="60" y="152" width="1" height="1" fill="#000"/><rect x="61" y="152" width="1" height="1" fill="#ff00ff"/><rect x="62" y="152" width="1" height="1" fill="#000"/><rect x="70" y="152" width="1" height="1" fill="#000"/><rect x="71" y="152" width="1" height="1" fill="#00ffff"/><rect x="72" y="152" width="1" height="1" fill="#000"/><rect x="73" y="152" width="1" height="1" fill="#00ffff"/><rect x="74" y="152" width="1" height="1" fill="#000"/><rect x="61" y="153" width="1" height="1" fill="#000"/><rect x="71" y="153" width="3" height="1" fill="#000"/>
</svg>
<div class="a" style="left:78px;top:140px;width:44px;height:16px;background:#d4d0c8"></div>
<div class="a tr" style="left:42px;top:29px;font-weight:bold;letter-spacing:0.35px">VBAProject (DDE_tutorial.xlsm)</div>
<div class="a tr" style="left:60px;top:45px;letter-spacing:-0.15px">Microsoft Excel Objects</div>
<div class="a tr" style="left:80px;top:61px;letter-spacing:-0.1px">Sheet1 (Sheet1)</div>
<div class="a tr" style="left:80px;top:77px;letter-spacing:-0.1px">Sheet2 (Sheet2)</div>
<div class="a tr" style="left:80px;top:93px;letter-spacing:-0.1px">Sheet3 (Sheet3)</div>
<div class="a tr" style="left:80px;top:109px;letter-spacing:-0.25px">ThisWorkbook</div>
<div class="a tr" style="left:61px;top:125px;letter-spacing:-0.45px">Modules</div>
<div class="a tr" style="left:80px;top:141px;letter-spacing:-0.45px">Module1</div>


<!-- properties title -->
<div class="a" style="left:0;top:478px;width:239px;height:15px;background:#808080"></div>
<div class="a" style="left:1px;top:478px;font-size:11px;line-height:14px;font-weight:bold;color:#d4d0c8;letter-spacing:0.45px;white-space:nowrap">Properties - Module1</div>
<div class="a" style="left:225px;top:479px;width:14px;height:13px;background:#404040"></div>
<div class="a" style="left:225px;top:479px;width:13px;height:12px;background:#fff"></div>
<div class="a" style="left:226px;top:480px;width:12px;height:11px;background:#808080"></div>
<div class="a" style="left:226px;top:480px;width:11px;height:10px;background:#d4d0c8"></div>
<svg class="a" style="left:227px;top:481px" width="9" height="8" shape-rendering="crispEdges"><path d="M0 0h2v1h-2zM7 0h2v1h-2zM1 1h2v1h-2zM6 1h2v1h-2zM2 2h2v1h-2zM5 2h2v1h-2zM3 3h3v1h-3zM2 4h2v1h-2zM5 4h2v1h-2zM1 5h2v1h-2zM6 5h2v1h-2zM0 6h2v1h-2zM7 6h2v1h-2z" fill="#000"/></svg>

<!-- properties combo -->
<div class="a" style="left:0;top:497px;width:238px;height:19px;border-top:1px solid #808080;border-left:1px solid #808080;border-right:1px solid #fff;border-bottom:1px solid #fff"></div>
<div class="a" style="left:1px;top:498px;width:236px;height:17px;border-top:1px solid #404040;border-left:1px solid #404040;border-right:1px solid #d4d0c8;border-bottom:1px solid #d4d0c8;background:#fff"></div>
<div class="a" style="left:3px;top:501px;font-size:11px;line-height:13px;white-space:nowrap"><b style="letter-spacing:0.25px">Module1</b>&nbsp; <span style="letter-spacing:-0.3px">Module</span></div>
<div class="a" style="left:219px;top:500px;width:16px;height:15px;background:#404040"></div>
<div class="a" style="left:219px;top:500px;width:15px;height:14px;background:#fff"></div>
<div class="a" style="left:220px;top:501px;width:14px;height:13px;background:#808080"></div>
<div class="a" style="left:220px;top:501px;width:13px;height:12px;background:#d4d0c8"></div>
<svg class="a" style="left:224px;top:506px" width="5" height="3" shape-rendering="crispEdges"><path d="M0 0h5v1h-5zM1 1h3v1h-3zM2 2h1v1h-1z" fill="#000"/></svg>

<!-- tabs -->
<div class="a" style="left:0;top:518px;width:66px;height:21px;background:#d4d0c8;border-top:1px solid #fff;border-left:1px solid #fff;border-right:1px solid #404040;border-top-left-radius:2px"></div>
<div class="a" style="left:64px;top:519px;width:1px;height:20px;background:#808080"></div>
<div class="a" style="left:8px;top:522px;font-size:11px;line-height:13px;letter-spacing:-0.15px;white-space:nowrap">Alphabetic</div>
<div class="a" style="left:66px;top:520px;width:68px;height:18px;background:#d4d0c8;border-top:1px solid #fff;border-right:1px solid #404040"></div>
<div class="a" style="left:132px;top:521px;width:1px;height:17px;background:#808080"></div>
<div class="a" style="left:69px;top:524px;font-size:11px;line-height:13px;letter-spacing:-0.2px;white-space:nowrap">Categorized</div>
<!-- tab panel -->
<div class="a" style="left:65px;top:538px;width:174px;height:1px;background:#fff"></div>
<div class="a" style="left:0;top:519px;width:1px;height:507px;background:#fff"></div>
<div class="a" style="left:238px;top:538px;width:1px;height:488px;background:#404040"></div>
<div class="a" style="left:237px;top:539px;width:1px;height:487px;background:#808080"></div>
<!-- grid -->
<div class="a" style="left:5px;top:541px;width:229px;height:485px;border-top:1px solid #808080;border-left:1px solid #808080;border-right:1px solid #fff"></div>
<div class="a" style="left:6px;top:542px;width:227px;height:484px;border-top:1px solid #404040;border-left:1px solid #404040;border-right:1px solid #d4d0c8;background:#fff"></div>
<div class="a" style="left:7px;top:543px;width:38px;height:15px;background:#0a246a"></div>
<div class="a" style="left:7px;top:558px;width:225px;height:1px;background:#c0c0c0"></div>
<div class="a" style="left:8px;top:545px;font-size:11px;line-height:13px;color:#fff;letter-spacing:-0.2px;white-space:nowrap">(Name)</div>
<div class="a" style="left:47px;top:545px;font-size:11px;line-height:13px;letter-spacing:-0.3px;white-space:nowrap">Module1</div>

<!-- splitter / MDI border -->
<div class="a" style="left:239px;top:0;width:1px;height:24px;background:#dcd4c4"></div>
<div class="a" style="left:245px;top:0;width:1px;height:1026px;background:#808080"></div>
<div class="a" style="left:246px;top:0;width:1px;height:1026px;background:#404040"></div>

<!-- code window combos -->
<div class="a" style="left:247px;top:0;width:974px;height:10px;background:#d4d0c8"></div>
<div class="a" style="left:247px;top:0;width:1px;height:10px;background:#e0dcd4"></div>
<div class="a" style="left:247px;top:9px;width:974px;height:1px;background:#e0dcd4"></div>
<div class="a" style="left:256px;top:0;width:1px;height:8px;background:#e0dcd4"></div>
<div class="a" style="left:257px;top:0;width:760px;height:8px;border-left:1px solid #808080;border-right:1px solid #fff;border-bottom:1px solid #fff"></div>
<div class="a" style="left:258px;top:0;width:758px;height:7px;border-left:1px solid #404040;border-right:1px solid #d4d0c8;border-bottom:1px solid #d4d0c8;background:#fff"></div>
<div class="a" style="left:262px;top:0;width:1px;height:1px;background:#000"></div><div class="a" style="left:263px;top:1px;width:1px;height:1px;background:#000"></div>
<div class="a" style="left:1000px;top:0;width:16px;height:6px;background:#404040"></div>
<div class="a" style="left:1000px;top:0;width:15px;height:5px;background:#d4d0c8;border-left:1px solid #fff"></div>
<div class="a" style="left:1028px;top:0;width:193px;height:8px;border-left:1px solid #808080;border-bottom:1px solid #fff"></div>
<div class="a" style="left:1029px;top:0;width:192px;height:7px;border-left:1px solid #404040;border-bottom:1px solid #d4d0c8;background:#fff"></div>

<!-- code window borders -->
<div class="a" style="left:247px;top:10px;width:974px;height:1px;background:#808080"></div>
<div class="a" style="left:247px;top:10px;width:1px;height:1016px;background:#808080"></div>
<div class="a" style="left:248px;top:11px;width:973px;height:1px;background:#404040"></div>
<div class="a" style="left:248px;top:11px;width:1px;height:1015px;background:#404040"></div>
<div class="a" style="left:249px;top:12px;width:20px;height:1014px;background:#d4d0c8;border-top:1px solid #e6e2da;border-left:1px solid #e6e2da"></div>
<div class="a" style="left:268px;top:12px;width:1px;height:1014px;background:#e6e2da"></div>
<div class="a" style="left:269px;top:12px;width:1px;height:1014px;background:#000"></div>

<div id="code"><pre><span class="c">' Toto je funkce, kterou pak priradime k nasemu tlacitku</span>
<span class="k">Sub</span> NacteniDat()
    <span class="c">' Prvne si musime definovat promenne - tim si rezervujeme mista v operacni pameti,</span>
    <span class="c">' kam pak muzeme ukladat ruzne hodnoty</span>

    <span class="c">' Sem si nacteme uzivatelske jmeno</span>
    <span class="k">Dim</span> UzivatelskeJmeno <span class="k">As String</span>
    <span class="c">' Sem si budeme ukladat jmeno aktualniho symbolu</span>
    <span class="k">Dim</span> JmenoSymbolu <span class="k">As String</span>
    <span class="c">' Tady si budeme ukladat informaci o cisle aktualniho radku</span>
    <span class="k">Dim</span> AktualniRadek <span class="k">As Integer</span>
    <span class="c">' A sem si budeme vytvaret control link</span>
    <span class="k">Dim</span> ControlLink <span class="k">As String</span>

    <span class="c">' Prvne musime nacist jmeno uctu z druheho radku, druheho sloupce</span>
    UzivatelskeJmeno = ActiveSheet.Cells(2, 2)

    <span class="c">' AktualniRadek nastavime na 4, protoze symboly zacinaji az na ctvrtem radku</span>
    AktualniRadek = 4
    <span class="c">' A tady uz je cyklus, ktery se bude provadet, dokud symbol nebude prazdny string</span>
    <span class="k">Do While</span> ActiveSheet.Cells(AktualniRadek, 1) &lt;&gt; ""
        <span class="c">' Nacteme si symbol z aktulaniho radku a prvniho sloupce</span>
        JmenoSymbolu = ActiveSheet.Cells(AktualniRadek, 1)
        <span class="c">' Vytvorime control link, jako ID pouzijeme cislo radku, jednotlive retezce se spojuji pomoci &amp;</span>
        ControlLink = "=" &amp; UzivatelskeJmeno &amp; "|tik!id" &amp; AktualniRadek &amp; "?req?" &amp; JmenoSymbolu &amp; "_STK_SMART_USD"
        <span class="c">' Control link vlozime na aktualni radek do druheho sloupce</span>
        ActiveSheet.Cells(AktualniRadek, 2) = ControlLink
        <span class="c">' A ted si jednoduse vlozime jednotlive hodnoty do dalsich sloupecku</span>
        ActiveSheet.Cells(AktualniRadek, 3) = "=" &amp; UzivatelskeJmeno &amp; "|tik!id" &amp; AktualniRadek &amp; "?bidSize"
        ActiveSheet.Cells(AktualniRadek, 4) = "=" &amp; UzivatelskeJmeno &amp; "|tik!id" &amp; AktualniRadek &amp; "?bid"
        ActiveSheet.Cells(AktualniRadek, 5) = "=" &amp; UzivatelskeJmeno &amp; "|tik!id" &amp; AktualniRadek &amp; "?ask"
        ActiveSheet.Cells(AktualniRadek, 6) = "=" &amp; UzivatelskeJmeno &amp; "|tik!id" &amp; AktualniRadek &amp; "?askSize"
        ActiveSheet.Cells(AktualniRadek, 7) = "=" &amp; UzivatelskeJmeno &amp; "|tik!id" &amp; AktualniRadek &amp; "?last"
        <span class="c">' Inkrementujeme AktualniRadek o jeden, protoze v dalsim prubehu cyklu chceme projit dalsi radek</span>
        AktualniRadek = AktualniRadek + 1
        <span class="c">' Ted jeste jedna vychytavka - pokud se pokusite vytvorit vetsi mnozstvi control linku ve velice rychlem</span>
        <span class="c">' casovem sledu, TWS to neunese. Takze na konci kazdeho prubehu cyklem pockame jednu sekundu, aby se TWS</span>
        <span class="c">' melo cas vzpamatovat. VBA nema zadnou "pause" funkci, takze musime mit nize napsanou svoji.</span>
        Pause 1
    <span class="c">' Dalsi prubeh cyklu</span>
    <span class="k">Loop</span>

<span class="k">End Sub</span>

<span class="c">' Tohle je funkce, ktera implementuje "pause" ve VBA - kod je z Internetu</span>
<span class="k">Public Sub</span> Pause(<span class="k">ByVal</span> pSng_Secs <span class="k">As Single</span>)
<span class="c">'Wait for the number of seconds given by pSng_Secs</span>
<span class="k">Dim</span> lSng_Start <span class="k">As Single</span>
<span class="k">Dim</span> lSng_End <span class="k">As Single</span>

<span class="k">On Error GoTo</span> Err_Pause

    lSng_Start = Timer
    lSng_End = Timer + pSng_Secs
    <span class="k">Do While</span> Timer &lt; lSng_End
    <span class="c">'' Correction if the timer moves over to a new day (midnight)</span>
    <span class="c">'' 86400-num of secs in a day</span>
        <span class="k">If</span> Timer &lt; lSng_Start <span class="k">Then</span> lSng_End = lSng_End - 86400
    <span class="k">Loop</span>

Err_Pause:
    <span class="k">Exit Sub</span>
<span class="k">End Sub</span></pre>
<div class="a" style="left:0;top:689px;width:951px;height:1px;background:#808080"></div>
<div class="a" style="left:619px;top:434px;width:1px;height:16px;background:#000"></div>
</div>

</body></html>
